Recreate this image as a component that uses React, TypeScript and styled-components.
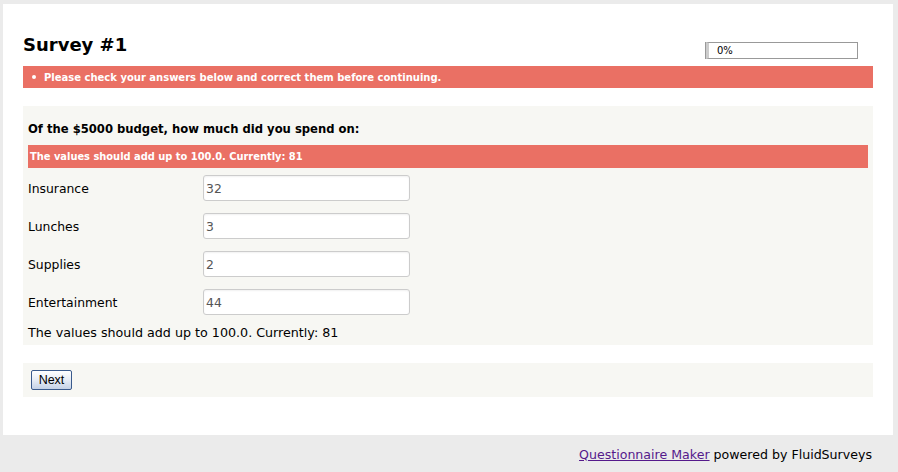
import React from "react";
import styled, { createGlobalStyle } from "styled-components";

const Global = createGlobalStyle`
  html, body { margin: 0; padding: 0; background: #ebebeb; }
  body { font-family: "DejaVu Sans", Verdana, sans-serif; color: #000; }
  * { box-sizing: border-box; }
`;

const Page = styled.div`
  width: 898px;
  height: 472px;
  padding: 4px 5px 0 3px;
  display: flex;
  flex-direction: column;
`;

const Panel = styled.main`
  background: #fff;
  height: 431px;
  padding: 0 20px;
  display: flex;
  flex-direction: column;
`;

const Header = styled.header`
  display: flex;
  align-items: flex-end;
  justify-content: space-between;
  height: 62px;
  padding-bottom: 4px;
`;

const Title = styled.h1`
  margin: 0 0 7px;
  font-size: 18px;
  font-weight: bold;
  line-height: 20px;
`;

const Progress = styled.div`
  width: 152px;
  height: 17px;
  margin: 0 15px 3px 0;
  border: 1px solid #999;
  border-left: 3px solid #ccc;
  box-shadow: -1px 0 0 #999;
  font-size: 10px;
  line-height: 15px;
  padding-left: 8px;
`;

const ErrorBar = styled.ul`
  margin: 0;
  height: 22px;
  background: #ea7064;
  color: #fff;
  font-size: 10px;
  font-weight: bold;
  list-style: none;
  padding: 0 0 0 9px;
  display: flex;
  align-items: center;
`;

const ErrorItem = styled.li`
  display: flex;
  align-items: center;
  gap: 8px;
  &::before {
    content: "";
    width: 4px;
    height: 4px;
    border-radius: 50%;
    background: #fff;
  }
`;

const Block = styled.section`
  background: #f7f7f3;
  padding: 0 5px;
`;

const Question = styled(Block)`
  margin-top: 18px;
  height: 239px;
  display: flex;
  flex-direction: column;
`;

const QText = styled.div`
  font-size: 11.6px;
  font-weight: bold;
  height: 39px;
  display: flex;
  align-items: center;
  padding-top: 6px;
`;

const InlineError = styled.div`
  background: #ea7064;
  color: #fff;
  font-size: 9.9px;
  font-weight: bold;
  height: 23px;
  display: flex;
  align-items: center;
  padding-left: 2px;
`;

const Rows = styled.div`
  display: flex;
  flex-direction: column;
  gap: 12px;
  padding-top: 7px;
`;

const Row = styled.label`
  display: grid;
  grid-template-columns: 175px 207px;
  align-items: center;
  font-size: 12.4px;
  height: 26px;
`;

const Input = styled.input`
  width: 207px;
  height: 26px;
  border: 1px solid #ccc;
  border-radius: 3px;
  background: #fff;
  box-shadow: inset 0 1px 2px rgba(0, 0, 0, 0.06);
  font-family: "DejaVu Sans", Verdana, sans-serif;
  font-size: 12.4px;
  color: #555;
  padding: 0 0 0 2px;
  outline: none;
`;

const Sum = styled.div`
  font-size: 12.7px;
  margin-top: 10px;
`;

const Nav = styled(Block)`
  margin-top: 18px;
  height: 34px;
  display: flex;
  align-items: center;
  padding: 0 8px;
`;

const Button = styled.button`
  width: 41px;
  height: 20px;
  border: 1px solid #3a5a8c;
  border-radius: 2px;
  background: linear-gradient(#ffffff, #e6ecf5 50%, #c5d2e6);
  font-family: "Liberation Sans", Arial, sans-serif;
  font-size: 12.5px;
  color: #000;
  padding: 0;
`;

const Footer = styled.footer`
  flex: 1;
  display: flex;
  align-items: center;
  justify-content: flex-end;
  padding: 1px 21px 0 0;
  font-size: 12.6px;
  gap: 4px;
`;

const Link = styled.a`
  color: #551a8b;
`;

const items = [
  { label: "Insurance", value: "32" },
  { label: "Lunches", value: "3" },
  { label: "Supplies", value: "2" },
  { label: "Entertainment", value: "44" },
];

export default function App() {
  return (
    <>
      <Global />
      <Page>
        <Panel>
          <Header>
            <Title>Survey #1</Title>
            <Progress>0%</Progress>
          </Header>
          <ErrorBar>
            <ErrorItem>Please check your answers below and correct them before continuing.</ErrorItem>
          </ErrorBar>
          <Question>
            <QText>Of the $5000 budget, how much did you spend on:</QText>
            <InlineError>The values should add up to 100.0. Currently: 81</InlineError>
            <Rows>
              {items.map((it) => (
                <Row key={it.label}>
                  <span>{it.label}</span>
                  <Input defaultValue={it.value} />
                </Row>
              ))}
            </Rows>
            <Sum>The values should add up to 100.0. Currently: 81</Sum>
          </Question>
          <Nav>
            <Button>Next</Button>
          </Nav>
        </Panel>
        <Footer>
          <Link href="#">Questionnaire Maker</Link>
          <span>powered by FluidSurveys</span>
        </Footer>
      </Page>
    </>
  );
}
